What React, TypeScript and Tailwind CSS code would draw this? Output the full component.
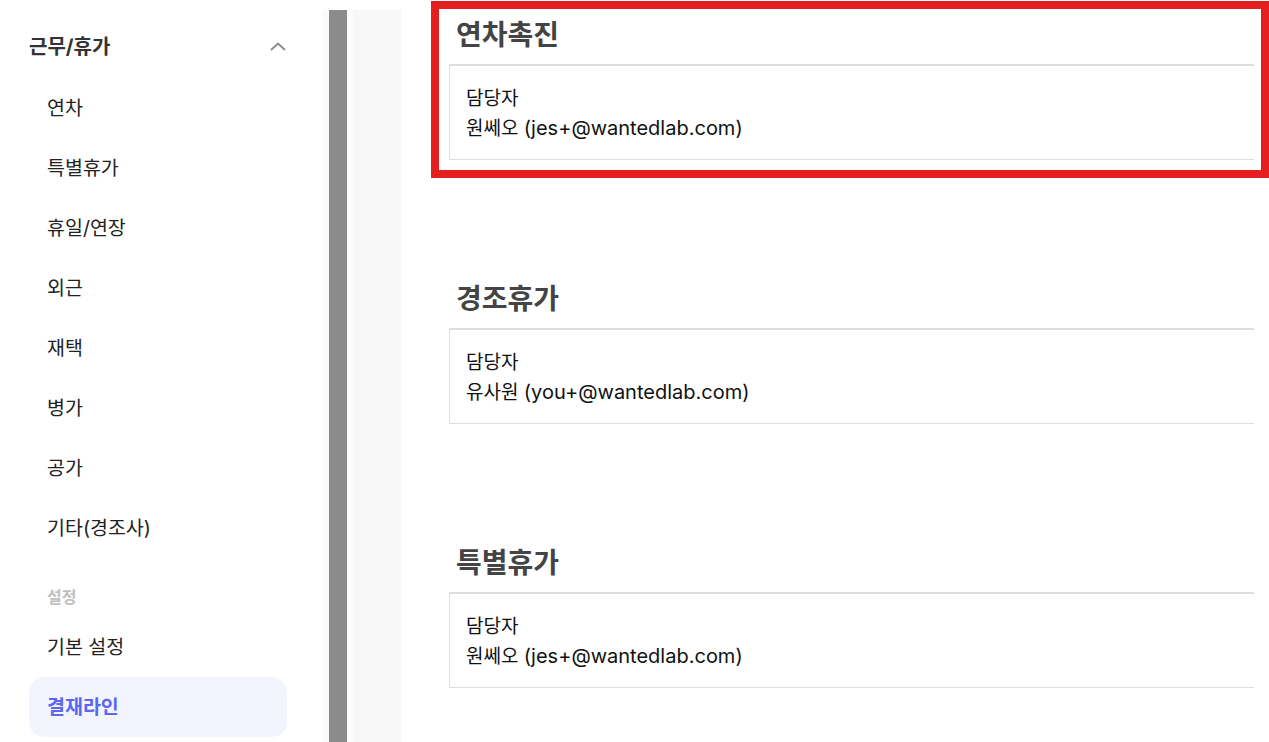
const font = { fontFamily: "Inter, 'Noto Sans CJK KR', sans-serif" };

const menu = ["연차", "특별휴가", "휴일/연장", "외근", "재택", "병가", "공가", "기타(경조사)"];

const sections = [
  { title: "연차촉진", name: "원쎄오", email: "(jes+@wantedlab.com)" },
  { title: "경조휴가", name: "유사원", email: "(you+@wantedlab.com)" },
  { title: "특별휴가", name: "원쎄오", email: "(jes+@wantedlab.com)" },
];

function Sidebar() {
  return (
    <aside className="w-[323px] shrink-0 bg-white pt-[17px] pl-[29px] pr-[36px] flex flex-col">
      <div className="h-[60px] flex items-center justify-between">
        <span className="text-[20px] font-bold text-[#333]">근무/휴가</span>
        <svg width="16" height="9" viewBox="0 0 16 9" className="mr-[1px] -mt-[2px]">
          <polyline points="1,8 8,1.5 15,8" fill="none" stroke="#8a8a8a" strokeWidth="1.8" />
        </svg>
      </div>
      {menu.map((m) => (
        <div key={m} className="h-[60px] flex items-center px-[18px] pt-[3px] text-[19.5px] text-[#222]">
          {m}
        </div>
      ))}
      <div className="h-[60px] px-[18px] pt-[30px] text-[16px] leading-[20px] font-bold text-[#c0c0c0]">
        설정
      </div>
      <div className="h-[60px] flex items-center px-[18px] pt-[2px] text-[19.5px] text-[#222]">기본 설정</div>
      <div className="h-[60px] flex items-center px-[18px] pt-[2px] rounded-[15px] bg-[#f2f5fe] text-[19.5px] font-semibold text-[#5b66f3]">
        결재라인
      </div>
    </aside>
  );
}

function Card({ title, name, email }: { title: string; name: string; email: string }) {
  return (
    <section className="mb-[121px]">
      <h2 className="h-[36px] pl-[7px] text-[28px] leading-[36px] font-bold text-[#444] mb-[11px]">{title}</h2>
      <div className="border-t-2 border-l border-b border-[#dedede] pl-4 pt-[18px] pb-[15px] text-[19px] text-[#111]">
        <div className="h-[30px] leading-[30px]">담당자</div>
        <div className="h-[30px] leading-[30px]">
          {name} <span className="text-[20px] leading-[20px]">{email}</span>
        </div>
      </div>
    </section>
  );
}

export default function App() {
  return (
    <div className="flex h-[742px] w-full overflow-hidden bg-white" style={font}>
      <Sidebar />
      <div className="w-[78px] shrink-0 pt-[10px] flex">
        <div className="w-[6px] bg-[#fbfbfb]" />
        <div className="w-[18px] bg-[#8b8b8b]" />
        <div className="w-[6px] bg-[#fcfcfc]" />
        <div className="w-[48px] bg-[#f8f8f8]" />
      </div>
      <main className="relative flex-1 pl-[48px] pr-[15px] pt-[17px]">
        {sections.map((s) => (
          <Card key={s.title} title={s.title} name={s.name} email={s.email} />
        ))}
        <div className="absolute left-[30px] top-[1px] w-[838px] h-[177px] border-8 border-[#e51e1e] pointer-events-none" />
      </main>
    </div>
  );
}
